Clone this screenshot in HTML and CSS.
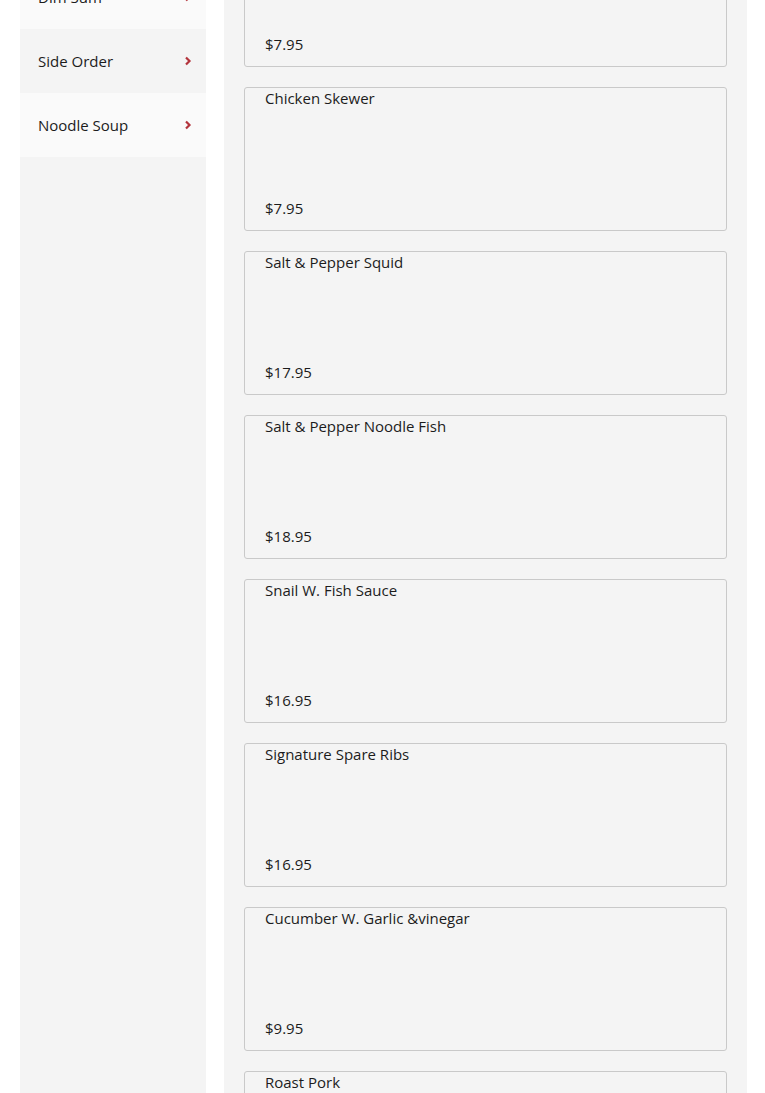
FILE: index.html
```html
<!DOCTYPE html>
<html lang="en">
<head>
  <meta charset="UTF-8">
  <meta name="viewport" content="width=device-width, initial-scale=1.0">
  <title>Menu</title>
  <link rel="stylesheet" href="styles.css">
</head>
<body>
  <div class="page">
    <div class="sidebar">
      <a class="cat light" href="#">Appetizer
        <svg class="chev" width="8" height="10" viewBox="0 0 8 10"><path d="M2 1.5 L5.5 5 L2 8.5" fill="none" stroke="#b3343c" stroke-width="2.2"/></svg>
      </a>
      <a class="cat light" href="#">Dim Sum
        <svg class="chev" width="8" height="10" viewBox="0 0 8 10"><path d="M2 1.5 L5.5 5 L2 8.5" fill="none" stroke="#b3343c" stroke-width="2.2"/></svg>
      </a>
      <a class="cat" href="#">Side Order
        <svg class="chev" width="8" height="10" viewBox="0 0 8 10"><path d="M2 1.5 L5.5 5 L2 8.5" fill="none" stroke="#b3343c" stroke-width="2.2"/></svg>
      </a>
      <a class="cat light" href="#">Noodle Soup
        <svg class="chev" width="8" height="10" viewBox="0 0 8 10"><path d="M2 1.5 L5.5 5 L2 8.5" fill="none" stroke="#b3343c" stroke-width="2.2"/></svg>
      </a>
    </div>

    <div class="items">
      <div class="card"><div class="name">Spring Roll</div><div class="price">$7.95</div></div>
      <div class="card"><div class="name">Chicken Skewer</div><div class="price">$7.95</div></div>
      <div class="card"><div class="name">Salt &amp; Pepper Squid</div><div class="price">$17.95</div></div>
      <div class="card"><div class="name">Salt &amp; Pepper Noodle Fish</div><div class="price">$18.95</div></div>
      <div class="card"><div class="name">Snail W. Fish Sauce</div><div class="price">$16.95</div></div>
      <div class="card"><div class="name">Signature Spare Ribs</div><div class="price">$16.95</div></div>
      <div class="card"><div class="name">Cucumber W. Garlic &amp;vinegar</div><div class="price">$9.95</div></div>
      <div class="card"><div class="name">Roast Pork</div><div class="price">$14.95</div></div>
    </div>
  </div>
</body>
</html>
```

FILE: styles.css
```css
body {
  margin: 0;
  background-color: #ffffff;
  font-family: "Open Sans", Arial, sans-serif;
  color: #1c1c1c;
}

/* page is shown scrolled a little way down */
.page {
  display: flex;
  gap: 18px;
  padding: 0 18px 0 20px;
  margin-top: -99px;
}

.sidebar {
  width: 186px;
  flex-shrink: 0;
  background-color: #f4f4f4;
  min-height: 1300px;
}

.cat {
  display: flex;
  align-items: center;
  justify-content: space-between;
  height: 64px;
  padding: 0 14px 0 18px;
  font-size: 15px;
  color: #1c1c1c;
  text-decoration: none;
}

.cat.light {
  background-color: #fafafa;
}

.items {
  flex: 1;
  background-color: #f4f4f4;
  padding: 22px 20px;
  display: flex;
  flex-direction: column;
  gap: 20px;
}

.card {
  height: 144px;
  box-sizing: border-box;
  border: 1px solid #c9c9c9;
  border-radius: 3px;
  padding: 0 20px 12px;
  display: flex;
  flex-direction: column;
  justify-content: space-between;
  font-size: 15px;
}

.name, .price {
  line-height: 20px;
}
```
